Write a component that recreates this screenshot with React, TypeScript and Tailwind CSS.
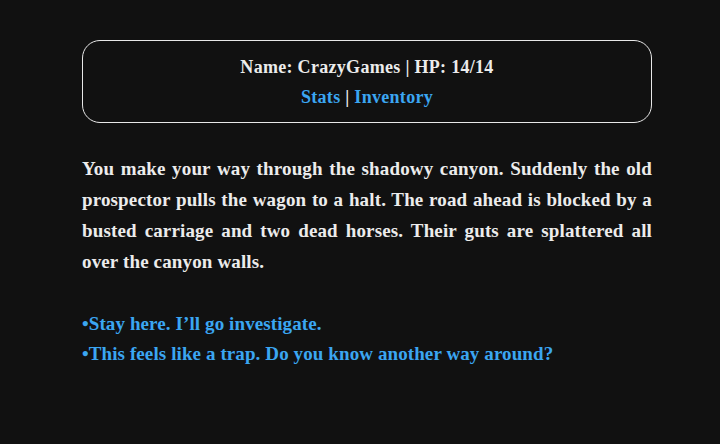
export default function App() {
  const lines = [
    "You make your way through the shadowy canyon. Suddenly the old",
    "prospector pulls the wagon to a halt. The road ahead is blocked by a",
    "busted carriage and two dead horses. Their guts are splattered all",
  ];
  return (
    <div
      className="w-[720px] h-[444px] bg-[#111111] text-[#ececec] font-bold overflow-hidden"
      style={{ fontFamily: '"Liberation Serif", "DejaVu Serif", serif' }}
    >
      <div className="w-[570px] ml-[82px] pt-[40px]">
        <div className="h-[83px] border border-[#e8e8e8] rounded-[18px] flex flex-col items-center pt-[11px] text-[18px] leading-[30px] tracking-[0.3px]">
          <div>Name: CrazyGames | HP: 14/14</div>
          <div>
            <span className="text-[#3ba6f2]">Stats</span> |{" "}
            <span className="text-[#3ba6f2]">Inventory</span>
          </div>
        </div>
        <div className="mt-[30px] text-[19px] leading-[31px] tracking-[0.14px]">
          {lines.map((l) => (
            <div key={l} className="text-justify [text-align-last:justify]">
              {l}
            </div>
          ))}
          <div>over the canyon walls.</div>
        </div>
        <div className="mt-[32px] text-[19px] leading-[30px] tracking-[0.1px] text-[#3ba6f2]">
          <div>•Stay here. I’ll go investigate.</div>
          <div>•This feels like a trap. Do you know another way around?</div>
        </div>
      </div>
    </div>
  );
}
